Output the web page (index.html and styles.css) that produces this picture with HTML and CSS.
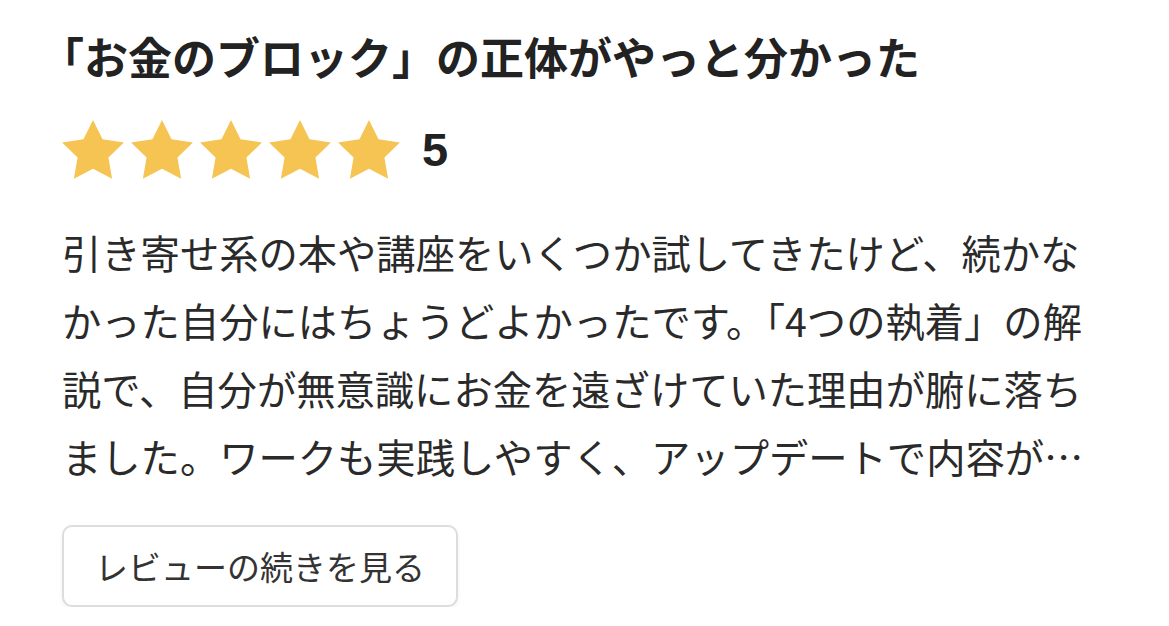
FILE: index.html
```html
<!DOCTYPE html>
<html lang="ja">
<head>
<meta charset="utf-8">
<title>レビュー</title>
<link rel="stylesheet" href="styles.css">
</head>
<body>
<article class="review">
  <h2 class="review-title">「お金のブロック」の正体がやっと分かった</h2>
  <div class="rating">
    <div class="stars">
      <svg class="star" viewBox="2 2 20 19.1" width="62" height="59"><path d="M12 2l3.09 6.26L22 9.27l-5 4.87 1.18 6.88L12 17.77l-6.18 3.25L7 14.14 2 9.27l6.91-1.01L12 2z"/></svg>
      <svg class="star" viewBox="2 2 20 19.1" width="62" height="59"><path d="M12 2l3.09 6.26L22 9.27l-5 4.87 1.18 6.88L12 17.77l-6.18 3.25L7 14.14 2 9.27l6.91-1.01L12 2z"/></svg>
      <svg class="star" viewBox="2 2 20 19.1" width="62" height="59"><path d="M12 2l3.09 6.26L22 9.27l-5 4.87 1.18 6.88L12 17.77l-6.18 3.25L7 14.14 2 9.27l6.91-1.01L12 2z"/></svg>
      <svg class="star" viewBox="2 2 20 19.1" width="62" height="59"><path d="M12 2l3.09 6.26L22 9.27l-5 4.87 1.18 6.88L12 17.77l-6.18 3.25L7 14.14 2 9.27l6.91-1.01L12 2z"/></svg>
      <svg class="star" viewBox="2 2 20 19.1" width="62" height="59"><path d="M12 2l3.09 6.26L22 9.27l-5 4.87 1.18 6.88L12 17.77l-6.18 3.25L7 14.14 2 9.27l6.91-1.01L12 2z"/></svg>
    </div>
    <span class="score">5</span>
  </div>
  <p class="review-body">引き寄せ系の本や講座をいくつか試してきたけど、続かなかった自分にはちょうどよかったです。「4つの執着」の解説で、自分が無意識にお金を遠ざけていた理由が腑に落ちました。ワークも実践しやすく、アップデートで内容が増えていくのも嬉しいポイントです。</p>
  <button class="more-btn" type="button">レビューの続きを見る</button>
</article>
</body>
</html>
```

FILE: styles.css
```css
html, body {
  margin: 0;
  padding: 0;
  background: #ffffff;
}

body {
  font-family: "Noto Sans CJK JP", "Noto Sans", sans-serif;
  color: #222222;
}

.review {
  padding: 26px 62px 0 62px;
  display: flex;
  flex-direction: column;
  align-items: flex-start;
}

.review-title {
  margin: 0;
  font-size: 44px;
  line-height: 60px;
  font-weight: 700;
  color: #222222;
  text-spacing-trim: trim-start;
}

.rating {
  margin-top: 32px;
  display: flex;
  align-items: center;
  height: 62px;
}

.stars {
  display: flex;
  gap: 7px;
}

.star {
  display: block;
  fill: #F5C453;
}

.score {
  margin-left: 22px;
  font-family: "Liberation Sans", Arial, sans-serif;
  font-size: 47px;
  font-weight: 700;
  line-height: 1;
  color: #222222;
}

.review-body {
  margin: 38px 0 0 0;
  font-size: 39.3px;
  line-height: 68px;
  color: #2a2a2a;
  display: -webkit-box;
  -webkit-box-orient: vertical;
  -webkit-line-clamp: 4;
  overflow: hidden;
  width: 100%;
}

.more-btn {
  margin-top: 35px;
  font-family: "Noto Sans CJK JP", "Noto Sans", sans-serif;
  font-size: 33px;
  line-height: 40px;
  color: #333333;
  background: #ffffff;
  border: 2px solid #dddddd;
  border-radius: 10px;
  padding: 19px 31px;
  box-shadow: 0 2px 4px rgba(0, 0, 0, 0.06);
  cursor: pointer;
}
```
